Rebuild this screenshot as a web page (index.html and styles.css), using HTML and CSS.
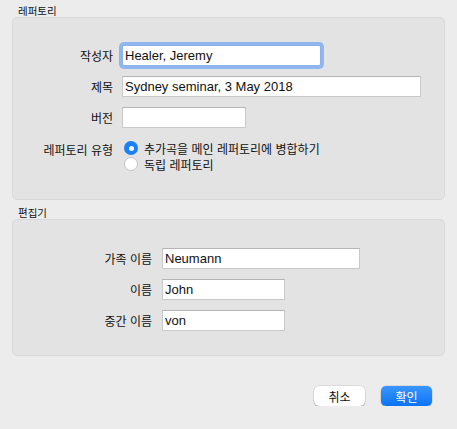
FILE: index.html
```html
<!DOCTYPE html>
<html lang="ko">
  <head>
    <meta charset="UTF-8" />
    <title>레퍼토리</title>
    <link rel="stylesheet" href="styles.css">
  </head>
  <body>
    <div class="dialog">
      <div class="group-title">레퍼토리</div>
      <div class="group repertoire">
        <label class="label">작성자</label>
        <input class="field focused w-author" type="text" value="Healer, Jeremy" />
        <label class="label">제목</label>
        <input class="field w-title" type="text" value="Sydney seminar, 3 May 2018" />
        <label class="label">버전</label>
        <input class="field w-version" type="text" value="" />
        <label class="label radio-label">레퍼토리 유형</label>
        <div class="radios">
          <div class="radio-row"><span class="radio checked"></span>추가곡을 메인 레퍼토리에 병합하기</div>
          <div class="radio-row"><span class="radio"></span>독립 레퍼토리</div>
        </div>
      </div>

      <div class="group-title second">편집기</div>
      <div class="group editor">
        <label class="label">가족 이름</label>
        <input class="field w-family" type="text" value="Neumann" />
        <label class="label">이름</label>
        <input class="field w-short" type="text" value="John" />
        <label class="label">중간 이름</label>
        <input class="field w-short" type="text" value="von" />
      </div>

      <div class="buttons">
        <button class="btn">취소</button>
        <button class="btn primary">확인</button>
      </div>
    </div>
  </body>
</html>
```

FILE: styles.css
```css
body {
  margin: 0;
  background-color: #ececec;
  font-family: "Liberation Sans", "Noto Sans CJK KR", sans-serif;
  font-size: 13px;
  color: #111;
}

.dialog {
  padding: 0 12px;
}

.group-title {
  font-family: "Noto Sans CJK KR", sans-serif;
  font-size: 10.5px;
  line-height: 13px;
  padding: 4px 0 0 6px;
  height: 13px;
}

.group-title.second {
  padding-top: 6px;
}

.group {
  display: grid;
  align-items: center;
  row-gap: 10px;
  background: #e3e3e3;
  border: 1px solid #d9d9d9;
  border-radius: 5px;
  box-sizing: border-box;
}

.repertoire {
  grid-template-columns: 100px auto;
  column-gap: 9px;
  padding: 27px 0 27px 0;
  height: 183px;
}

.editor {
  grid-template-columns: 139px auto;
  column-gap: 10px;
  padding: 28px 0 26px 0;
  height: 137px;
}

.label {
  font-family: "Noto Sans CJK KR", sans-serif;
  font-size: 12px;
  text-align: right;
}

.field {
  height: 21px;
  box-sizing: border-box;
  border: 1px solid #c9c9c9;
  border-top-color: #b5b5b5;
  background: #fff;
  font-family: "Liberation Sans", sans-serif;
  font-size: 13px;
  padding: 0 0 0 2px;
  margin: 0;
  color: #111;
  outline: none;
}

.field.focused {
  border-color: #8cb2ea;
  box-shadow: 0 0 0 3px #8fb6ee;
  border-radius: 2px;
}

.w-author { width: 199px; }
.w-title { width: 299px; }
.w-version { width: 124px; }
.w-family { width: 198px; }
.w-short { width: 123px; }

.radio-label {
  align-self: start;
  padding-top: 3px;
}

.radios {
  margin-top: 2px;
  font-family: "Noto Sans CJK KR", sans-serif;
  font-size: 12px;
}

.radio-row {
  display: flex;
  align-items: center;
  height: 16px;
}

.radio {
  width: 14px;
  height: 14px;
  box-sizing: border-box;
  border-radius: 50%;
  border: 1px solid #c4c4c4;
  background: #fff;
  margin: 0 6px 0 2px;
  position: relative;
}

.radio.checked {
  border: none;
  background: #1b7ff5;
}

.radio.checked::after {
  content: "";
  position: absolute;
  left: 4.5px;
  top: 4.5px;
  width: 5px;
  height: 5px;
  border-radius: 50%;
  background: #fff;
}

.buttons {
  display: flex;
  justify-content: flex-end;
  gap: 16px;
  margin-top: 30px;
  padding-right: 13px;
}

.btn {
  width: 51px;
  height: 20px;
  padding: 0;
  border: none;
  border-radius: 5px;
  background: #fff;
  box-shadow: 0 0 0 0.5px rgba(0, 0, 0, 0.15), 0 1px 1px rgba(0, 0, 0, 0.2);
  font-family: "Noto Sans CJK KR", sans-serif;
  font-size: 12px;
  color: #111;
}

.btn.primary {
  background: linear-gradient(#3b96fb, #0a74f6);
  color: #fff;
}
```
